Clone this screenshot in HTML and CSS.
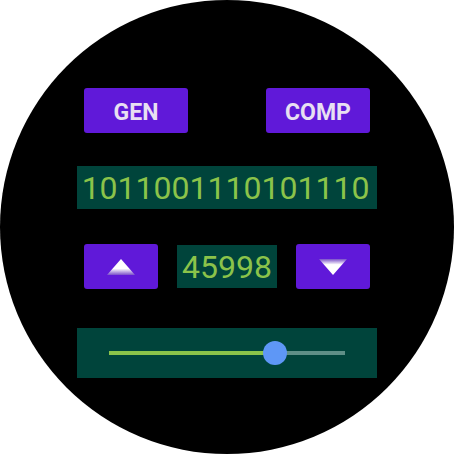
FILE: index.html
```html
<!DOCTYPE html>
<html>
<head>
<meta charset="utf-8">
<link rel="stylesheet" href="styles.css">
</head>
<body>
<div class="watch">
  <div class="row row-top">
    <div class="btn btn-wide btn-text">GEN</div>
    <div class="btn btn-wide btn-text">COMP</div>
  </div>
  <div class="display display-bin">1011001110101110</div>
  <div class="row row-num">
    <div class="btn btn-arrow">
      <svg width="28" height="16" viewBox="0 0 28 16">
        <defs>
          <linearGradient id="gu" x1="0" y1="0" x2="0" y2="1">
            <stop offset="0" stop-color="#ffffff"/>
            <stop offset="0.6" stop-color="#ffffff"/>
            <stop offset="1" stop-color="#7a4fc8"/>
          </linearGradient>
        </defs>
        <polygon points="14,0 28,16 0,16" fill="url(#gu)"/>
      </svg>
    </div>
    <div class="display display-num">45998</div>
    <div class="btn btn-arrow">
      <svg width="28" height="16" viewBox="0 0 28 16">
        <defs>
          <linearGradient id="gd" x1="0" y1="0" x2="0" y2="1">
            <stop offset="0" stop-color="#7a4fc8"/>
            <stop offset="0.35" stop-color="#ffffff"/>
            <stop offset="1" stop-color="#ffffff"/>
          </linearGradient>
        </defs>
        <polygon points="0,0 28,0 14,16" fill="url(#gd)"/>
      </svg>
    </div>
  </div>
  <div class="slider-panel">
    <div class="track">
      <div class="track-active" style="width: 70.19%"></div>
      <div class="thumb" style="left: 70.19%"></div>
    </div>
  </div>
</div>
</body>
</html>
```

FILE: styles.css
```css
html, body {
  margin: 0;
  padding: 0;
  background: #ffffff;
}
.watch {
  width: 454px;
  height: 454px;
  border-radius: 50%;
  background: #000000;
  display: flex;
  flex-direction: column;
  align-items: center;
  box-sizing: border-box;
  padding-top: 88px;
  font-family: Roboto, "Liberation Sans", sans-serif;
}
.row {
  display: flex;
  align-items: center;
}
.row-top {
  gap: 78px;
  height: 45px;
}
.btn {
  background: #6019d9;
  border-radius: 3px;
  height: 45px;
  display: flex;
  align-items: center;
  justify-content: center;
  box-sizing: border-box;
}
.btn-text {
  color: #e8e0f2;
  font-weight: 700;
  font-size: 23px;
  padding-top: 4px;
}
.btn-wide {
  width: 104px;
}
.btn-arrow {
  width: 74px;
}
.display {
  background: #00443b;
  color: #8bc34a;
  font-size: 32px;
  display: flex;
  align-items: center;
  justify-content: center;
  height: 43px;
}
.display-bin {
  width: 300px;
  margin-top: 33px;
  padding-right: 3px;
  box-sizing: border-box;
}
.row-num {
  margin-top: 35px;
  gap: 19px;
  height: 45px;
}
.display-num {
  width: 100px;
}
.slider-panel {
  margin-top: 39px;
  width: 300px;
  height: 50px;
  background: #00443b;
  box-sizing: border-box;
  padding: 0 32px;
  display: flex;
  align-items: center;
}
.track {
  position: relative;
  width: 100%;
  height: 4px;
  background: #5f8f87;
}
.track-active {
  height: 4px;
  background: #8bc34a;
}
.thumb {
  position: absolute;
  top: -10px;
  width: 24px;
  height: 24px;
  margin-left: -12px;
  border-radius: 50%;
  background: #5e97f6;
}
```
